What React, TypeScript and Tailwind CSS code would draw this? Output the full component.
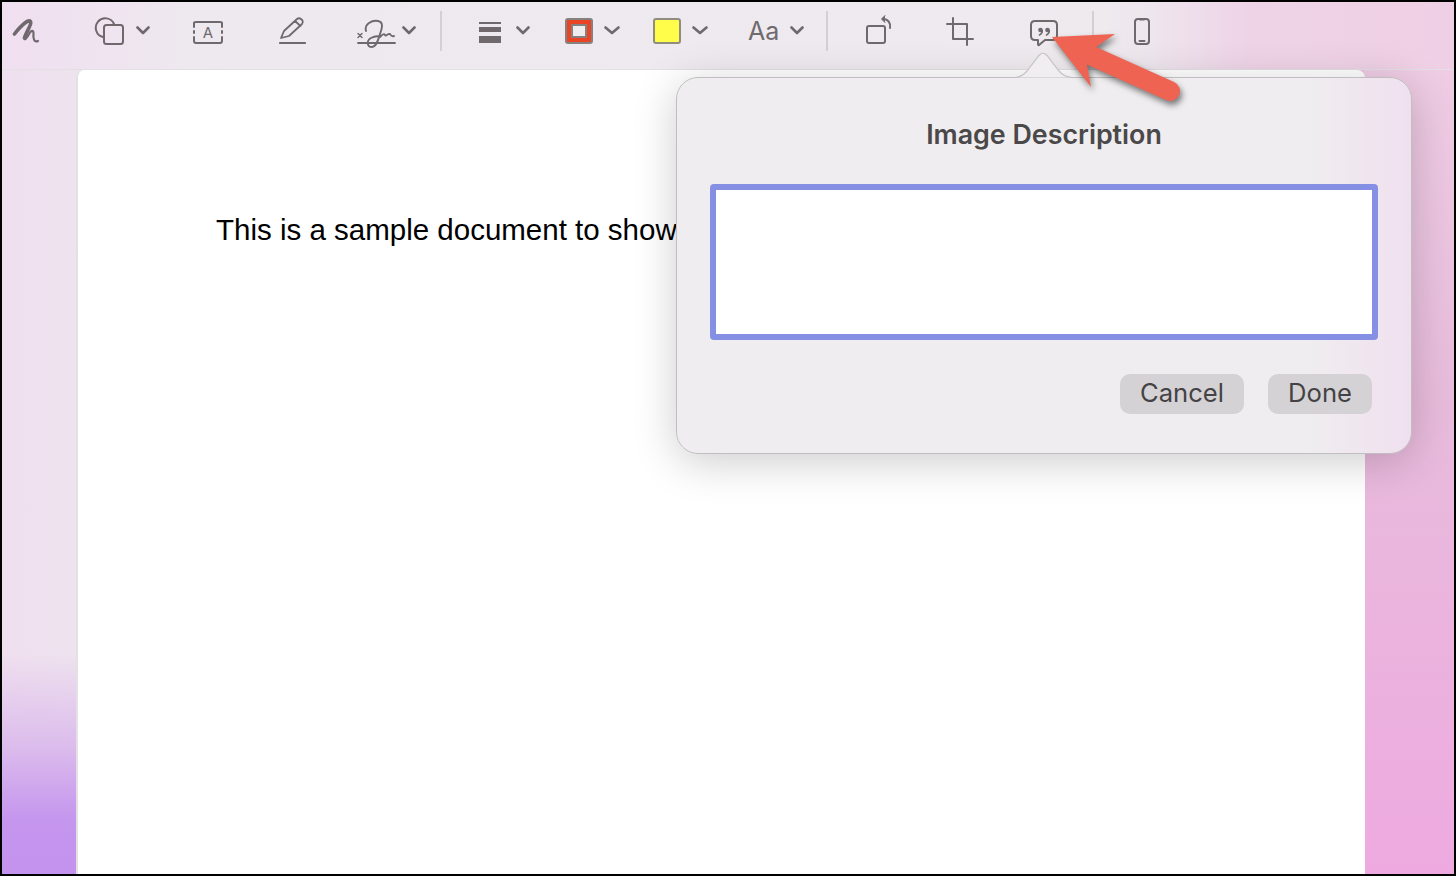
import React from 'react';

const ink = '#6f696e';

function Icon({ x, w, className, children }: { x: number; w: number; className: string; children?: React.ReactNode }) {
  // viewBox uses screenshot coordinates so paths can be read straight off the picture
  return (
    <svg viewBox={`${x} 14 ${w} 34`} width={w} height={34} fill="none" stroke={ink} strokeWidth={2} strokeLinecap="round" strokeLinejoin="round" className={`shrink-0 ${className}`}>
      {children}
    </svg>
  );
}

function Chevron({ x, w = 14, className }: { x: number; w?: number; className: string }) {
  return (
    <Icon x={x} w={w} className={className}>
      <path d={`M${x + 1.5} 27.5 L${x + w / 2} 33 L${x + w - 1.5} 27.5`} strokeWidth={2.6} />
    </Icon>
  );
}

function Divider({ className }: { className: string }) {
  return <div className={`h-[40px] w-[2px] shrink-0 bg-[#d3d0d4] ${className}`} />;
}

export default function App() {
  return (
    <div className="relative flex h-[876px] w-[1456px] flex-col overflow-hidden border-2 border-black bg-[linear-gradient(90deg,#efdfef_0%,#eee3ee_6%,#eee3ee_88%,#eec6e2_94%,#eeb0dd_100%)] font-['Inter',sans-serif]">
      <div className="absolute inset-x-0 bottom-0 h-[220px] w-[76px] bg-[linear-gradient(180deg,#efdcef00_0%,#dcbcec_42%,#c596ee_75%,#c393ee_100%)]" />
      <div className="absolute bottom-0 right-0 top-0 w-[90px] bg-[linear-gradient(180deg,#f0d0e6_0%,#e8bcdc_45%,#eeaae0_100%)]" />

      <div className="relative flex h-[68px] shrink-0 items-center border-b border-[#e2e0e2] bg-[linear-gradient(90deg,#f0dff0_0%,#eee9ef_14%,#eeeaee_76%,#eee6ee_79%,#eed3e6_86%,#efcfe5_100%)] pb-[10px] pl-[10px]">
        <Icon x={12} w={28} className="">
          <path d="M14.500 34 C20 27 27 20 30 21 C33 23 26 32 24.500 38" strokeWidth={3.6} />
          <path d="M24.500 38 C24 41 27 38 29 34 C31 30 33.500 30 33.500 33 C33 38 34 43 38 41" strokeWidth={2.2} />
        </Icon>
        <Icon x={94} w={30} className="ml-[54px]">
          <path d="M103 37 A9.5 9.5 0 1 1 114 24" />
          <rect x="104" y="25" width="19" height="19" rx="2.5" />
        </Icon>
        <Chevron x={136} className="ml-[12px]" />
        <Icon x={193} w={30} className="ml-[43px]">
          <path d="M194 27 V23 Q194 22 196 22 H220 Q222 22 222 23 V27 M194 31 V33 M222 31 V33 M194 37 V41 Q194 43 196 43 H220 Q222 43 222 41 V37" />
          <text x="208" y="38" textAnchor="middle" fontSize="15" fill={ink} stroke="none" fontFamily="Inter, sans-serif">A</text>
        </Icon>
        <Icon x={279} w={27} className="ml-[56px]">
          <path d="M280 43 H305" strokeWidth={2.2} />
          <path d="M281 38 L284 31 L297 19 Q299 17.5 301 19 L302.5 20.5 Q303.5 22 302 24 L289 36 Z M295 21 L300.5 26" strokeWidth={1.8} />
        </Icon>
        <Icon x={357} w={39} className="ml-[51px]">
          <path d="M358 43 H395" strokeWidth={1.8} />
          <path d="M358 33.500 L362 37.500 M362 33.500 L358 37.500" strokeWidth={1.4} />
          <path d="M366 31 C364 24 372 20 378 21 C384 22 382 28 380 34 C378 41 376 47 372 47 C367 47 366 41 371 38 C375 36 378 36 380 37 C382 35 384 33 385 35 C386 37 388 33 390 34 C391 35 391 37 394 36" strokeWidth={1.9} />
        </Icon>
        <Chevron x={402} className="ml-[6px]" />
        <Divider className="ml-[24px]" />
        <svg viewBox="479 14 22 34" width={22} height={34} className="ml-[37px] shrink-0" fill={ink}>
          <rect x="479" y="22" width="22" height="2" />
          <rect x="479" y="27" width="22" height="5" />
          <rect x="479" y="36" width="22" height="7" />
        </svg>
        <Chevron x={516} className="ml-[15px]" />
        <div className="ml-[35px] flex h-[26px] w-[28px] shrink-0 items-center justify-center rounded-[3px] border-2 border-[#85817f] bg-[#ea4425]">
          <div className="h-[14px] w-[16px] border-2 border-[#85817f] bg-[#efedef]" />
        </div>
        <Chevron x={604} w={16} className="ml-[11px]" />
        <div className="ml-[33px] h-[26px] w-[28px] shrink-0 rounded-[3px] border-2 border-[#8f8d80] bg-[#fffc4a]" />
        <Chevron x={692} w={16} className="ml-[11px]" />
        <div className="ml-[40px] w-[32px] shrink-0 whitespace-nowrap text-[25px] leading-[34px] text-[#6f6a6e]">Aa</div>
        <Chevron x={790} className="ml-[10px]" />
        <Divider className="ml-[22px]" />
        <Icon x={866} w={26} className="ml-[38px]">
          <rect x="867" y="26" width="18" height="17" rx="2" />
          <path d="M883 19 C888 19 891 23 890 28" />
          <path d="M885 15.500 L881.500 19 L885 22.500" fill={ink} strokeWidth={1} />
        </Icon>
        <Icon x={946} w={28} className="ml-[54px]">
          <path d="M947 24 H967 V45 M953 18 V39 H973" />
        </Icon>
        <Icon x={1030} w={28} className="ml-[56px]">
          <path d="M1035 21 H1053 Q1057 21 1057 25 V36 Q1057 40 1053 40 H1045 L1039 45 Q1038 45.500 1038 44 V40 H1035 Q1031 40 1031 36 V25 Q1031 21 1035 21 Z" />
          <circle cx="1040.500" cy="30" r="2.300" fill={ink} stroke="none" />
          <circle cx="1047.500" cy="30" r="2.300" fill={ink} stroke="none" />
          <path d="M1042.300 30.500 Q1042.300 33.500 1039.500 35 M1049.300 30.500 Q1049.300 33.500 1046.500 35" strokeWidth={1.6} />
        </Icon>
        <Divider className="ml-[34px]" />
        <Icon x={1134} w={16} className="ml-[40px]">
          <rect x="1135" y="19" width="14" height="25" rx="3" />
          <path d="M1140 19.500 H1144 M1139.500 41 H1144.500" />
        </Icon>
      </div>

      <div className="relative flex-1 pl-[74px]">
        <div className="h-full w-[1289px] rounded-t-[8px] border-l-2 border-[#e3e1e4] bg-white pl-[138px] pt-[142px] font-['Liberation_Sans',sans-serif] text-[29.5px] leading-[36px] text-black">
          This is a sample document to show how
        </div>
      </div>

      <svg viewBox="1010 50 68 30" width={68} height={30} className="absolute left-[1008px] top-[47px] z-20">
        <path d="M1015 78.500 Q1022 78 1027 72 L1039 56.500 Q1043 52 1047 56.500 L1059 72 Q1064 78 1072 78.500" fill="#f0eef0" stroke="#c6c4c6" strokeWidth={1.200} />
      </svg>

      <div className="absolute left-[674px] top-[75px] z-10 flex h-[377px] w-[736px] flex-col rounded-[22px] border border-[#c0bec0] bg-[linear-gradient(90deg,#efedef_0%,#efedef_86%,#f0e0ef_100%)] pl-[33px] pr-[33px] shadow-[0_8px_44px_rgba(0,0,0,0.2)]">
        <h1 className="mt-[39px] text-center text-[26.8px] font-semibold leading-[34px] text-[#4a4849]">Image Description</h1>
        <textarea className="mt-[33px] h-[156px] w-[668px] shrink-0 resize-none rounded-[4px] border-[6px] border-[#858fe3] bg-white outline-none" />
        <div className="mr-[6px] mt-[34px] flex justify-end gap-[24px]">
          <button className="h-[40px] w-[124px] rounded-[10px] bg-[#d4d2d4] pb-[2px] text-[25.6px] text-[#444244]">Cancel</button>
          <button className="h-[40px] w-[104px] rounded-[10px] bg-[#d4d2d4] pb-[2px] text-[25.6px] text-[#444244]">Done</button>
        </div>
      </div>

      <svg viewBox="1040 24 156 92" width={156} height={92} className="absolute left-[1038px] top-[22px] z-30 drop-shadow-[2px_4px_3px_rgba(0,0,0,0.5)]">
        <path d="M1092 56 L1170 91" stroke="#ee6352" strokeWidth={20} strokeLinecap="round" />
        <polygon points="1052,37 1115,34 1096,47 1087,65 1091,87" fill="#ee6352" />
      </svg>
    </div>
  );
}
